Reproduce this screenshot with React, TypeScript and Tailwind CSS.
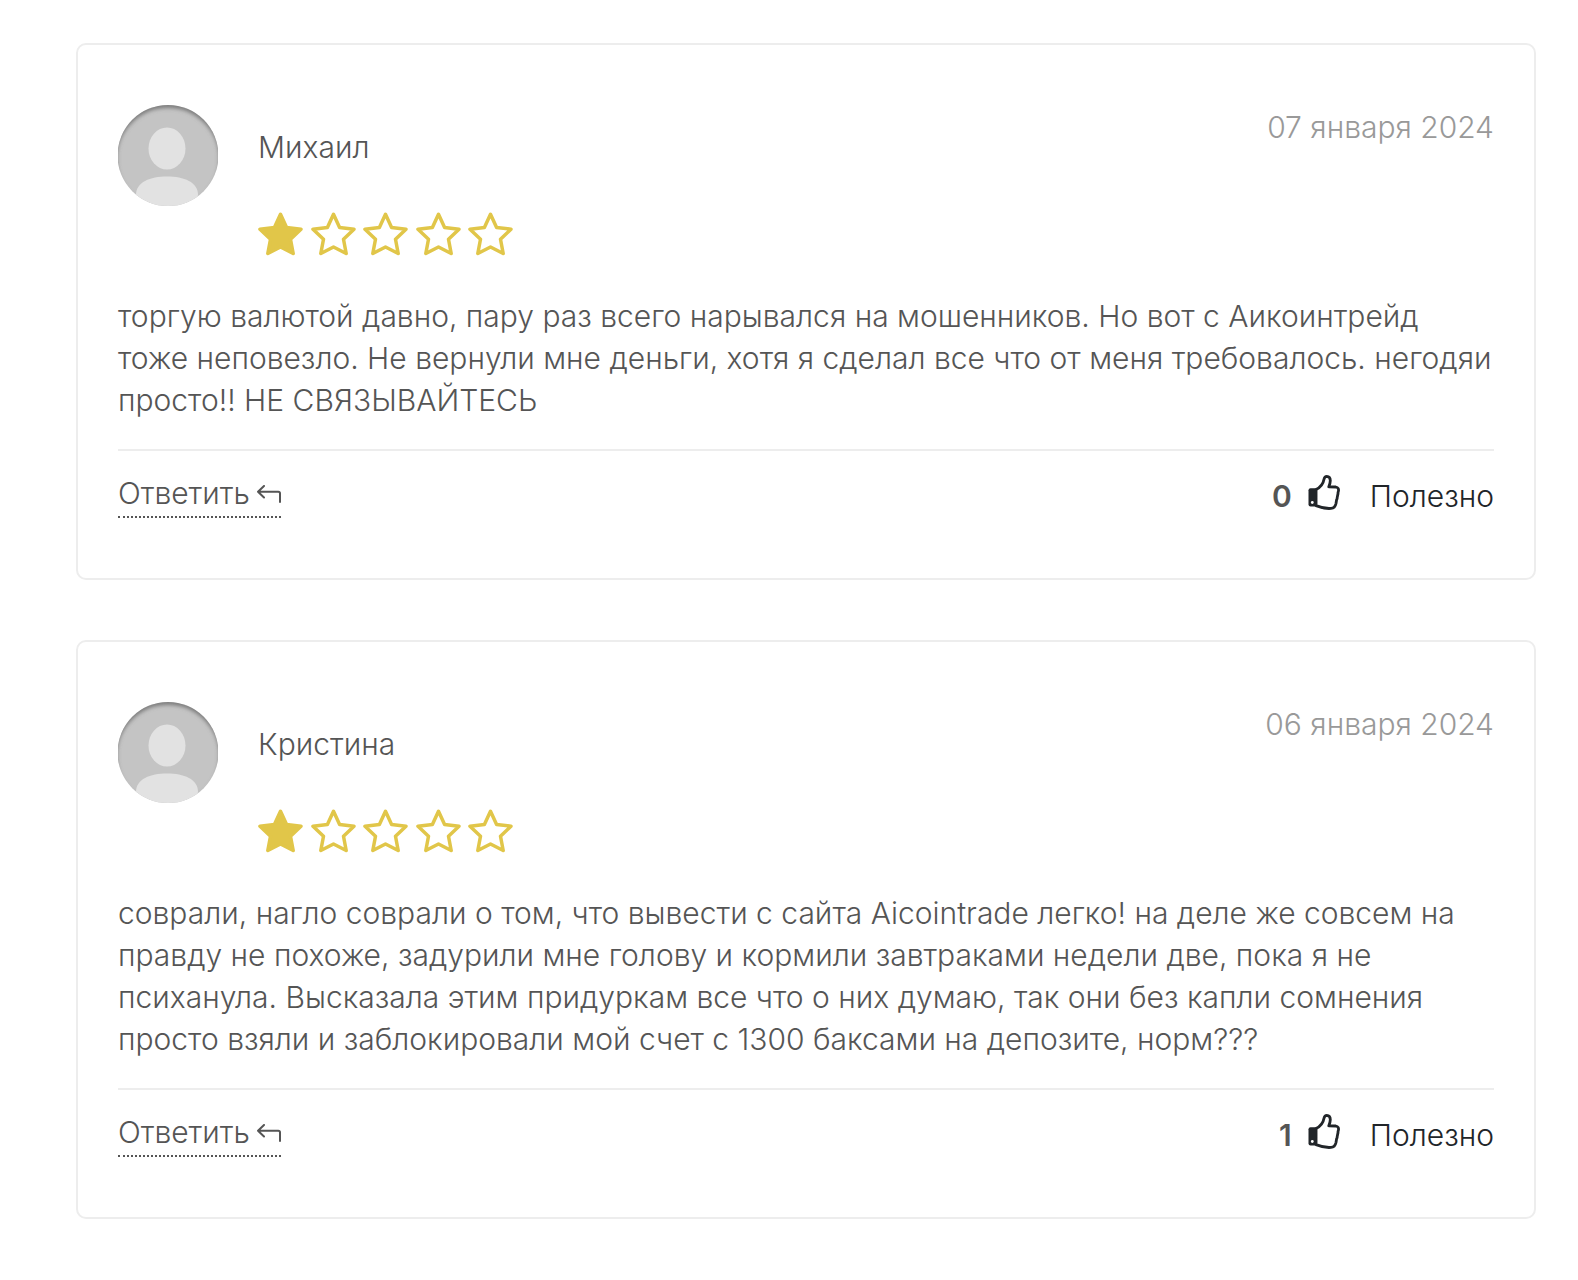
type Review = {
  id: string;
  name: string;
  date: string;
  rating: number;
  lines: string[];
  votes: number;
};

const reviews: Review[] = [
  {
    id: "mikhail",
    name: "Михаил",
    date: "07 января 2024",
    rating: 1,
    lines: [
      "торгую валютой давно, пару раз всего нарывался на мошенников. Но вот с Аикоинтрейд",
      "тоже неповезло. Не вернули мне деньги, хотя я сделал все что от меня требовалось. негодяи",
      "просто!! НЕ СВЯЗЫВАЙТЕСЬ",
    ],
    votes: 0,
  },
  {
    id: "kristina",
    name: "Кристина",
    date: "06 января 2024",
    rating: 1,
    lines: [
      "соврали, нагло соврали о том, что вывести с сайта Aicointrade легко! на деле же совсем на",
      "правду не похоже, задурили мне голову и кормили завтраками недели две, пока я не",
      "психанула. Высказала этим придуркам все что о них думаю, так они без капли сомнения",
      "просто взяли и заблокировали мой счет с 1300 баксами на депозите, норм???",
    ],
    votes: 1,
  },
];

function Avatar({ id }: { id: string }) {
  const clip = `avatar-clip-${id}`;
  const soft = `avatar-soft-${id}`;
  return (
    <svg viewBox="0 0 100 101" className="h-[101px] w-[100px] shrink-0" aria-hidden="true">
      <defs>
        <clipPath id={clip}>
          <circle cx="50" cy="50.5" r="50.5" />
        </clipPath>
        <filter id={soft} x="-20%" y="-20%" width="140%" height="140%">
          <feGaussianBlur stdDeviation="2" />
        </filter>
      </defs>
      <g clipPath={`url(#${clip})`}>
        <rect width="100" height="101" fill="#c4c4c4" />
        <circle cx="50" cy="54" r="54" fill="none" stroke="#6e6e6e" strokeWidth="5" filter={`url(#${soft})`} />
        <ellipse cx="49" cy="43.5" rx="18.5" ry="21" fill="#e2e2e2" />
        <path d="M18 90C18 77 32 71.500 49 71.500S80 77 80 90L76 101H22Z" fill="#e2e2e2" />
      </g>
    </svg>
  );
}

function Star({ filled }: { filled: boolean }) {
  return (
    <svg viewBox="0 0 45 44" className="h-11 w-[45px]" aria-hidden="true">
      <path
        d="M22.5 2.3L28.6 15.4L43 17.2L32.5 27.2L35.2 41.5L22.5 35L9.8 41.5L12.5 27.2L2 17.2L16.4 15.4Z"
        fill={filled ? "#e1c649" : "none"}
        stroke="#e1c649"
        strokeWidth="3.5"
        strokeLinejoin="round"
      />
    </svg>
  );
}

function ReplyArrow() {
  return (
    <svg viewBox="0 0 24 18" className="h-[18px] w-6" fill="none" stroke="#555" strokeWidth="2" strokeLinecap="round" strokeLinejoin="round" aria-hidden="true">
      <path d="M7 1L1 6.8L7 12.5M1 6.8H21.3Q23 6.8 23 8.5V17" />
    </svg>
  );
}

function ThumbUp() {
  return (
    <svg viewBox="0 0 32 35" className="h-[35px] w-8" aria-hidden="true">
      <path
        d="M8 14.6C12.5 12.2 15.2 9 16 4.2Q16.6 1.4 18.8 1.4Q22.3 1.6 22.3 5.6Q22.2 8.6 20.8 11.8L27.8 12Q31.2 12.7 30.4 16.2Q29.9 17.4 30 18.6L29.2 22.5Q29.3 23.7 28.6 24.8L28 28.5Q27 33.2 23 33.4Q16.500 34 8 30.6Z"
        fill="#fff"
        stroke="#212529"
        strokeWidth="2.8"
        strokeLinejoin="round"
      />
      <rect x="0.5" y="13.300" width="8.600" height="18.200" rx="2" fill="#212529" />
      <circle cx="4.300" cy="27.500" r="1.400" fill="#fff" />
    </svg>
  );
}

function ReviewCard({ review }: { review: Review }) {
  return (
    <article className="rounded-[10px] border-2 border-[#ededed] px-10 py-[60px]">
      <header className="flex items-start">
        <Avatar id={review.id} />
        <div className="ml-10 flex-1">
          <h2 className="mt-[21px]">{review.name}</h2>
          <div
            role="img"
            aria-label={`Оценка: ${review.rating} из 5`}
            className="mt-11 flex w-[255px] justify-between"
          >
            {[1, 2, 3, 4, 5].map((n) => (
              <Star key={n} filled={n <= review.rating} />
            ))}
          </div>
        </div>
        <time className="mt-px text-[#999]">{review.date}</time>
      </header>
      <p className="mt-[39px]">
        {review.lines.map((line) => (
          <span key={line} className="block">
            {line}
          </span>
        ))}
      </p>
      <footer className="mt-7 flex items-start justify-between border-t-2 border-[#ededed] pt-[21px]">
        <a href="#reply" className="flex h-[46px] items-start gap-[7px] border-b-2 border-dotted border-[#555]">
          Ответить
          <span className="mt-[13px]">
            <ReplyArrow />
          </span>
        </a>
        <div className="mt-[3px] flex items-start">
          <strong className="font-semibold">{review.votes}</strong>
          <button type="button" className="ml-4 flex items-start gap-[30px] text-[#212529]">
            <ThumbUp />
            <span>Полезно</span>
          </button>
        </div>
      </footer>
    </article>
  );
}

export default function App() {
  return (
    <main className="flex min-h-screen flex-col gap-[60px] bg-white pt-[43px] pr-[42px] pb-[60px] pl-[76px] font-['Inter',sans-serif] text-[30px] leading-[42px] font-light text-[#555]">
      {reviews.map((review) => (
        <ReviewCard key={review.id} review={review} />
      ))}
    </main>
  );
}
